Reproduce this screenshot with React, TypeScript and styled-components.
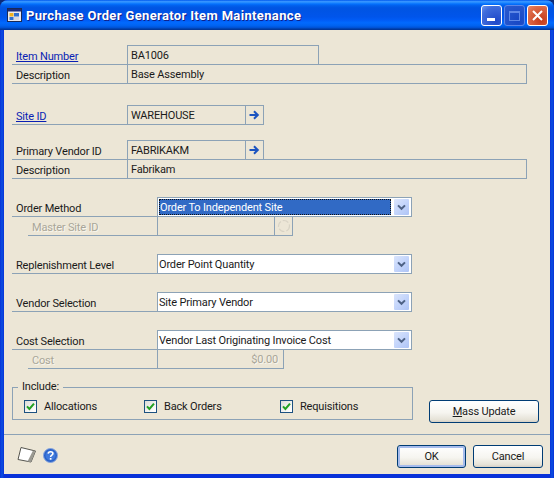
import React from "react";
import styled, { createGlobalStyle } from "styled-components";

const LINE = "#8ca2b6";
const PANEL = "#ece6d6";
const FONT = `Roboto, "Liberation Sans", Arial, sans-serif`;

const GlobalStyle = createGlobalStyle`
  html, body {
    margin: 0;
    padding: 0;
    background: #0b2a78;
  }
`;

const Window = styled.div`
  width: 554px;
  height: 478px;
  display: flex;
  flex-direction: column;
  overflow: hidden;
  border-radius: 8px 8px 0 0;
  background: linear-gradient(to right, #0831d9 0, #0a4fe0 2px, #0831d9 4px, #0831d9 550px, #0a4fe0 552px, #0831d9 554px);
  font-family: ${FONT};
  font-size: 11px;
  letter-spacing: -0.17px;
  color: #1a1a1a;
`;

const TitleBar = styled.div`
  height: 30px;
  flex: none;
  display: flex;
  align-items: center;
  padding: 0 6px 0 7px;
  background: linear-gradient(
    to bottom,
    #0058ee 0%,
    #3593ff 5%,
    #288eff 8%,
    #127dff 11%,
    #036ffc 14%,
    #0262ee 18%,
    #0057e5 24%,
    #0054e3 30%,
    #0055eb 56%,
    #005bf5 66%,
    #026afe 76%,
    #0062ef 86%,
    #0052d6 92%,
    #0040ab 96%,
    #003092 100%
  );
`;

const AppIcon = styled.svg`
  width: 15px;
  height: 14px;
  flex: none;
  margin-right: 4px;
`;

const TitleText = styled.div`
  flex: 1;
  font-size: 13px;
  font-weight: 700;
  letter-spacing: 0.35px;
  color: #fff;
  text-shadow: 1px 1px 0 #0f1f89;
`;

const CaptionGroup = styled.div`
  display: flex;
  gap: 2px;
`;

const CaptionButton = styled.div<{ $kind: "min" | "max" | "close" }>`
  width: 21px;
  height: 21px;
  box-sizing: border-box;
  display: flex;
  align-items: center;
  justify-content: center;
  border-radius: 3px;
  border: 1px solid ${({ $kind }) => ($kind === "max" ? "#5c86e8" : "#fff")};
  background: ${({ $kind }) =>
    $kind === "close"
      ? "radial-gradient(circle at 70% 75%, #c43a1a 0%, #dd6a48 70%, #e88a6c 100%)"
      : $kind === "max"
        ? "radial-gradient(circle at 70% 75%, #1747c4 0%, #2b5bd0 100%)"
        : "radial-gradient(circle at 75% 80%, #1e48c8 0%, #3f6cdc 70%, #6c96ee 100%)"};
`;

const Client = styled.div`
  flex: 1;
  margin: 0 4px 4px;
  display: flex;
  flex-direction: column;
  background: ${PANEL};
`;

const Form = styled.div`
  flex: 1;
  padding: 15px 0 0 8px;
`;

const Section = styled.div<{ $gap?: number }>`
  margin-top: ${({ $gap }) => $gap ?? 0}px;
`;

const Row = styled.div`
  display: flex;
  height: 20px;

  & + & {
    margin-top: -1px;
  }
`;

const Label = styled.div<{ $width: number; $indent?: boolean; $disabled?: boolean }>`
  width: ${({ $width }) => $width}px;
  margin-left: ${({ $indent }) => ($indent ? 16 : 0)}px;
  box-sizing: border-box;
  flex: none;
  padding: 4px 0 0 4px;
  line-height: 15px;
  border-bottom: 1px solid ${LINE};
  color: ${({ $disabled }) => ($disabled ? "#a9a699" : "inherit")};
  text-shadow: ${({ $disabled }) => ($disabled ? "1px 1px 0 #f8f5ec" : "none")};
`;

const LinkLabel = styled.span`
  color: #0a1fb4;
  text-decoration: underline;
`;

const Field = styled.div<{ $width: number }>`
  width: ${({ $width }) => $width}px;
  box-sizing: border-box;
  display: flex;
  border: 1px solid ${LINE};
`;

const Value = styled.div<{ $right?: boolean; $muted?: boolean }>`
  flex: 1;
  padding: 1px 5px 0 3px;
  line-height: 17px;
  white-space: nowrap;
  text-align: ${({ $right }) => ($right ? "right" : "left")};
  color: ${({ $muted }) => ($muted ? "#a9a699" : "inherit")};
  text-shadow: ${({ $muted }) => ($muted ? "1px 1px 0 #f8f5ec" : "none")};
`;

const LookupCell = styled.div<{ $width: number }>`
  width: ${({ $width }) => $width}px;
  flex: none;
  display: flex;
  align-items: center;
  justify-content: center;
  border-left: 1px solid ${LINE};
`;

const Combo = styled.div`
  width: 255px;
  height: 20px;
  box-sizing: border-box;
  flex: none;
  display: flex;
  align-items: center;
  padding: 1px;
  background: #fff;
  border: 1px solid ${LINE};
`;

const ComboText = styled.div<{ $selected?: boolean }>`
  flex: 1;
  height: 16px;
  box-sizing: border-box;
  margin-right: 3px;
  padding: 2px 0 0;
  line-height: 14px;
  white-space: nowrap;
  ${({ $selected }) =>
    $selected
      ? `background: #316ac5; color: #fff; outline: 1px dotted #111; outline-offset: -1px; padding-left: 1px;`
      : ``}
`;

const ComboButton = styled.div`
  width: 15px;
  height: 16px;
  flex: none;
  margin-right: 1px;
  display: flex;
  align-items: center;
  justify-content: center;
  border-radius: 1px;
  background: linear-gradient(135deg, #dbe5fc 0%, #c4d5fb 50%, #aec4f6 100%);
`;

const GroupRow = styled.div`
  display: flex;
  align-items: flex-start;
  margin-top: 18px;
`;

const IncludeBox = styled.fieldset`
  width: 401px;
  height: 33px;
  box-sizing: border-box;
  margin: 0;
  padding: 0 0 0 11px;
  display: flex;
  align-items: center;
  border: 1px solid ${LINE};
  position: relative;
`;

const IncludeTitle = styled.div`
  position: absolute;
  left: 5px;
  top: -8px;
  padding: 0 4px;
  line-height: 14px;
  background: ${PANEL};
`;

const CheckItem = styled.label<{ $width: number }>`
  width: ${({ $width }) => $width}px;
  flex: none;
  display: flex;
  align-items: center;
  gap: 7px;
  margin-top: 5px;
`;

const CheckBox = styled.span`
  width: 13px;
  height: 13px;
  box-sizing: border-box;
  display: flex;
  align-items: center;
  justify-content: center;
  border: 1px solid #1c5180;
  background: linear-gradient(135deg, #dcdcd7 0%, #fff 90%);
`;

const Footer = styled.div`
  flex: none;
  height: 40px;
  box-sizing: border-box;
  padding: 10px 7px 0 13px;
  display: flex;
  justify-content: space-between;
  align-items: flex-start;
  border-top: 1px solid ${LINE};
`;

const FooterIcons = styled.div`
  display: flex;
  align-items: center;
  gap: 6px;
  padding-top: 1px;
`;

const FooterButtons = styled.div`
  display: flex;
  gap: 7px;
`;

const Button = styled.button<{ $width: number; $default?: boolean; $offset?: number }>`
  width: ${({ $width }) => $width}px;
  height: 23px;
  box-sizing: border-box;
  margin: ${({ $offset }) => $offset ?? 0}px 0 0 ${({ $offset }) => ($offset ? 16 : 0)}px;
  padding: 0;
  flex: none;
  font: inherit;
  letter-spacing: inherit;
  color: #1a1a1a;
  border: 1px solid #003c74;
  border-radius: 3px;
  background: linear-gradient(to bottom, #fff 0%, #f6f5f0 55%, #e6e3d8 88%, #d6d0c5 100%);
  box-shadow: ${({ $default }) =>
    $default ? "inset 0 0 0 2px #a6bcec" : "none"};
`;

const Arrow = () => (
  <svg width="11" height="10" viewBox="0 0 11 10">
    <path d="M0.5 5H8.5M5 1.3 8.8 5 5 8.7" fill="none" stroke="#1c54c0" strokeWidth="2" />
  </svg>
);

const Chevron = () => (
  <svg width="9" height="7" viewBox="0 0 9 7">
    <path d="M1 1.4 4.5 4.8 8 1.4" fill="none" stroke="#4d6185" strokeWidth="2" />
  </svg>
);

const Check = () => (
  <svg width="9" height="9" viewBox="0 0 9 9">
    <path d="M1 4.4 3.4 7 8 1.6" fill="none" stroke="#21a121" strokeWidth="2" />
  </svg>
);

const LookupRing = () => (
  <svg width="14" height="14" viewBox="0 0 14 14">
    <circle cx="7" cy="7" r="5.5" fill="none" stroke="#d8d3c5" strokeWidth="1.2" strokeDasharray="6 2" />
  </svg>
);

const NoteIcon = () => (
  <svg width="20" height="18" viewBox="0 0 20 18">
    <path d="M4 1.5 18.5 5 14 16 1 13.5Z" fill="#fff" stroke="#55554f" strokeWidth="1" strokeLinejoin="round" />
    <path d="M18.5 5 14 16 10.5 15.4 16 4.4Z" fill="#9b9a92" />
  </svg>
);

const HelpIcon = () => (
  <svg width="15" height="15" viewBox="0 0 15 15">
    <circle cx="7.5" cy="7.5" r="7" fill="#2a62c8" stroke="#86a5de" strokeWidth="1" />
    <circle cx="7.5" cy="7.5" r="5" fill="#3f79dc" />
    <path d="M5.2 5.6C5.4 3.2 9.9 3.2 9.9 5.6 9.9 7.2 7.6 7.2 7.6 9" fill="none" stroke="#fff" strokeWidth="1.6" />
    <rect x="6.8" y="10" width="1.7" height="1.7" fill="#fff" />
  </svg>
);

const ComboRow = ({
  label,
  value,
  selected,
}: {
  label: string;
  value: string;
  selected?: boolean;
}) => (
  <Row>
    <Label $width={145}>{label}</Label>
    <Combo>
      <ComboText $selected={selected}>{value}</ComboText>
      <ComboButton>
        <Chevron />
      </ComboButton>
    </Combo>
  </Row>
);

const Include = ({ label, width }: { label: string; width: number }) => (
  <CheckItem $width={width}>
    <CheckBox>
      <Check />
    </CheckBox>
    {label}
  </CheckItem>
);

export default function App() {
  return (
    <Window>
      <GlobalStyle />
      <TitleBar>
        <AppIcon viewBox="0 0 15 14">
          <rect x="0.5" y="0.5" width="14" height="13" fill="#e8e8f0" stroke="#1b2a55" />
          <rect x="1" y="1" width="13" height="2.5" fill="#1b2a7a" />
          <rect x="2.5" y="5" width="4" height="3.5" fill="#f0b020" />
          <rect x="7" y="5" width="5" height="3.5" fill="#2f6fd0" />
          <rect x="2.5" y="9" width="4" height="3" fill="#2f6fd0" />
          <rect x="7" y="9" width="5" height="3" fill="#d8d8e0" />
        </AppIcon>
        <TitleText>Purchase Order Generator Item Maintenance</TitleText>
        <CaptionGroup>
          <CaptionButton $kind="min">
            <svg width="13" height="13" viewBox="0 0 13 13">
              <rect x="2" y="9" width="8" height="3" fill="#fff" />
            </svg>
          </CaptionButton>
          <CaptionButton $kind="max">
            <svg width="13" height="13" viewBox="0 0 13 13">
              <rect x="1.5" y="2.5" width="10" height="9" fill="none" stroke="#5f88e6" />
              <rect x="1" y="2" width="11" height="2" fill="#5f88e6" />
            </svg>
          </CaptionButton>
          <CaptionButton $kind="close">
            <svg width="13" height="13" viewBox="0 0 13 13">
              <path d="M2 2 11 11M11 2 2 11" stroke="#fff" strokeWidth="2" />
            </svg>
          </CaptionButton>
        </CaptionGroup>
      </TitleBar>
      <Client>
        <Form>
          <Section>
            <Row>
              <Label $width={115}>
                <LinkLabel>Item Number</LinkLabel>
              </Label>
              <Field $width={192}>
                <Value>BA1006</Value>
              </Field>
            </Row>
            <Row>
              <Label $width={115}>Description</Label>
              <Field $width={400}>
                <Value>Base Assembly</Value>
              </Field>
            </Row>
          </Section>

          <Section $gap={21}>
            <Row>
              <Label $width={115}>
                <LinkLabel>Site ID</LinkLabel>
              </Label>
              <Field $width={137}>
                <Value>WAREHOUSE</Value>
                <LookupCell $width={17}>
                  <Arrow />
                </LookupCell>
              </Field>
            </Row>
          </Section>

          <Section $gap={15}>
            <Row>
              <Label $width={115}>Primary Vendor ID</Label>
              <Field $width={137}>
                <Value>FABRIKAKM</Value>
                <LookupCell $width={17}>
                  <Arrow />
                </LookupCell>
              </Field>
            </Row>
            <Row>
              <Label $width={115}>Description</Label>
              <Field $width={400}>
                <Value>Fabrikam</Value>
              </Field>
            </Row>
          </Section>

          <Section $gap={18}>
            <ComboRow label="Order Method" value="Order To Independent Site" selected />
            <Row>
              <Label $width={129} $indent $disabled>
                Master Site ID
              </Label>
              <Field $width={136}>
                <Value />
                <LookupCell $width={17}>
                  <LookupRing />
                </LookupCell>
              </Field>
            </Row>
          </Section>

          <Section $gap={18}>
            <ComboRow label="Replenishment Level" value="Order Point Quantity" />
          </Section>

          <Section $gap={18}>
            <ComboRow label="Vendor Selection" value="Site Primary Vendor" />
          </Section>

          <Section $gap={18}>
            <ComboRow label="Cost Selection" value="Vendor Last Originating Invoice Cost" />
            <Row>
              <Label $width={129} $indent $disabled>
                Cost
              </Label>
              <Field $width={127}>
                <Value $right $muted>
                  $0.00
                </Value>
              </Field>
            </Row>
          </Section>

          <GroupRow>
            <IncludeBox>
              <IncludeTitle>Include:</IncludeTitle>
              <Include label="Allocations" width={120} />
              <Include label="Back Orders" width={136} />
              <Include label="Requisitions" width={100} />
            </IncludeBox>
            <Button $width={110} $offset={13}>
              <u>M</u>ass Update
            </Button>
          </GroupRow>
        </Form>
        <Footer>
          <FooterIcons>
            <NoteIcon />
            <HelpIcon />
          </FooterIcons>
          <FooterButtons>
            <Button $width={69} $default>
              OK
            </Button>
            <Button $width={70}>Cancel</Button>
          </FooterButtons>
        </Footer>
      </Client>
    </Window>
  );
}
